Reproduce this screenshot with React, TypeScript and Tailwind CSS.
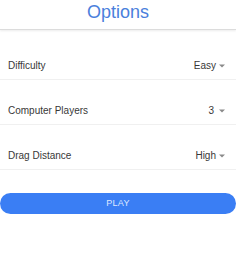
const rows = [
  { label: 'Difficulty', value: 'Easy', gap: 'ml-[3px]' },
  { label: 'Computer Players', value: '3', gap: 'ml-[5px]' },
  { label: 'Drag Distance', value: 'High', gap: 'ml-[3px]' },
];

function Caret({ gap }: { gap: string }) {
  return (
    <svg width="6" height="4" viewBox="0 0 6 4" className={`${gap} mt-[1px]`}>
      <path d="M0 0.5h6L3 3.5z" fill="#8a8a8a" />
    </svg>
  );
}

export default function App() {
  return (
    <div className="w-[236px] h-[253px] bg-white font-['Liberation_Sans',Arial,sans-serif]">
      <div className="h-[30px] flex items-center justify-center border-b border-[#dcdcdc] shadow-[0_1px_2px_rgba(0,0,0,0.08)]">
        <h1 className="text-[18px] leading-none text-[#4a80dc] mt-[-5px]">Options</h1>
      </div>
      <div className="mt-[5px]">
        {rows.map((row) => (
          <div
            key={row.label}
            className="h-[45px] pt-[16px] flex items-center justify-between pl-[8px] pr-[11px] border-b border-[#f0f0f0] text-[10px] text-[#383838]"
          >
            <span>{row.label}</span>
            <span className="flex items-center">
              {row.value}
              <Caret gap={row.gap} />
            </span>
          </div>
        ))}
      </div>
      <button className="mt-[23px] w-full h-[21px] rounded-full bg-[#3a7ef4] text-[9px] text-[#dfe8ff] tracking-[0.3px]">
        PLAY
      </button>
    </div>
  );
}
